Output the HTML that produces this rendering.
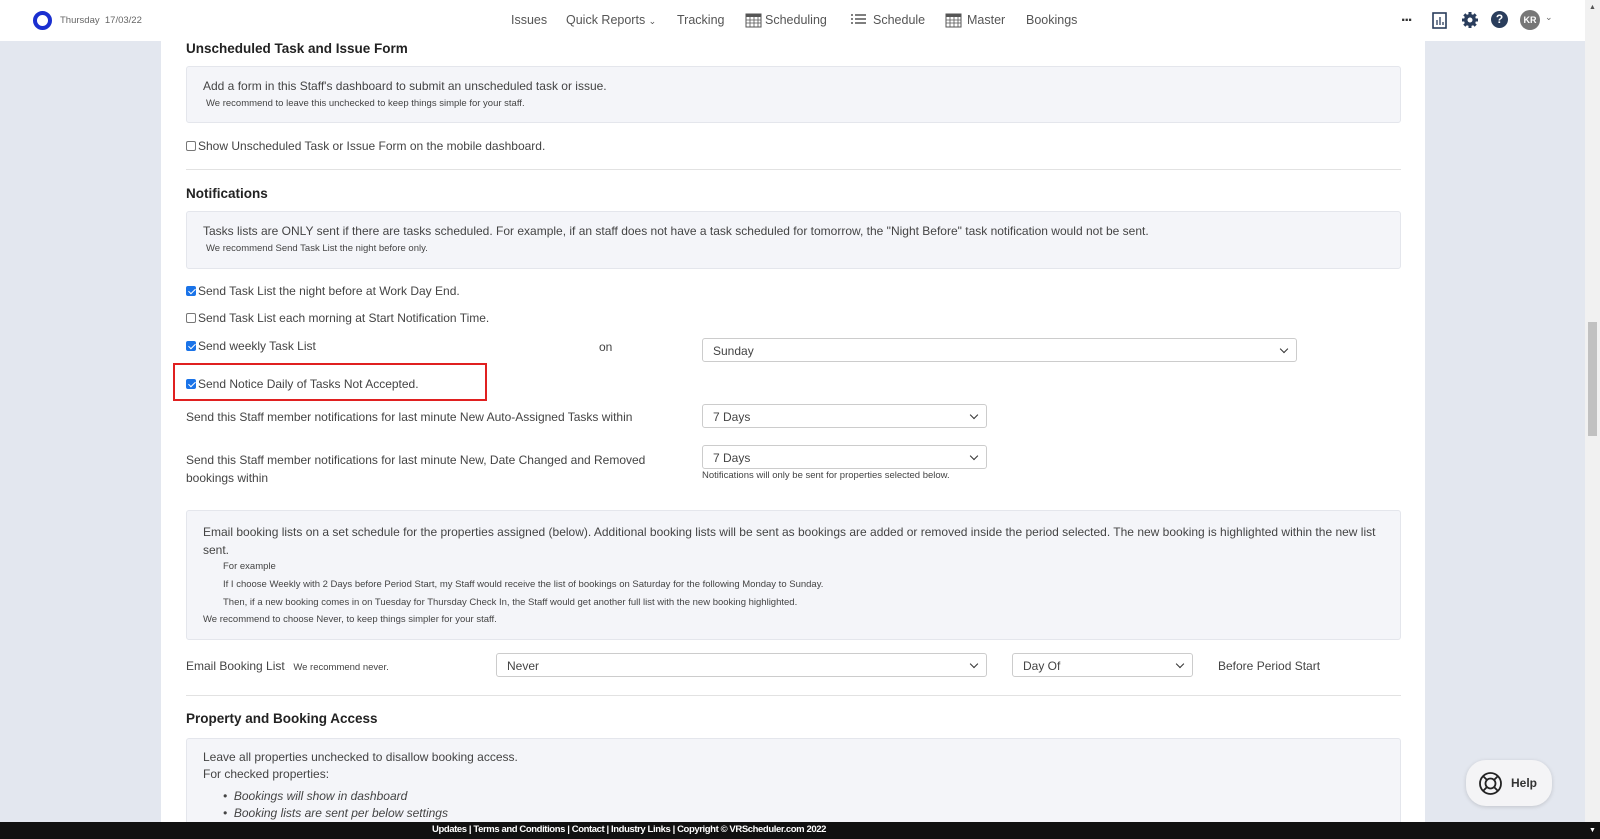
<!DOCTYPE html>
<html><head><meta charset="utf-8"><style>
*{box-sizing:border-box;margin:0;padding:0}
body{width:1600px;height:839px;overflow:hidden;background:#e3e7ef;font-family:"Liberation Sans",sans-serif;color:#444;font-size:12px;position:relative}
.a{position:absolute;white-space:nowrap}
.hdr{position:absolute;left:0;top:0;width:1585px;height:41px;background:#fff}
.nav{position:absolute;top:13px;font-size:12.5px;color:#555}
.panel{position:absolute;left:161px;top:41px;width:1264px;height:781px;background:#fff}
.h{position:absolute;left:186px;font-weight:bold;font-size:13.5px;color:#222}
.box{position:absolute;left:186px;width:1215px;background:#f4f5f9;border:1px solid #e4e6ec;border-radius:3px}
.sm{font-size:9.5px;color:#444}
.hr{position:absolute;left:186px;width:1215px;height:1px;background:#e2e2e2}
.cb{display:inline-block;width:10px;height:10px;border:1px solid #777;border-radius:2px;vertical-align:-1px;margin-right:2px;background:#fff}
.cb.on{background:#1a73e8;border-color:#1a73e8;position:relative}
.cb.on:after{content:"";position:absolute;left:2.5px;top:0px;width:3px;height:6px;border:solid #fff;border-width:0 1.5px 1.5px 0;transform:rotate(45deg)}
.sel{position:absolute;height:24px;border:1px solid #ccc;border-radius:3px;background:#fff;padding:5px 10px;font-size:12px;color:#444}
.sel:after{content:"";position:absolute;right:9px;top:7px;width:5px;height:5px;border:solid #333;border-width:0 1.5px 1.5px 0;transform:rotate(45deg)}
</style></head><body>
<div class="hdr">
<div class="a" style="left:33px;top:11px;width:19px;height:19px;border-radius:50%;border:4.5px solid #1a2fd0"></div>
<div class="a" style="left:60px;top:15px;font-size:9.5px;color:#666">Thursday&nbsp; 17/03/22</div>
<div class="nav a" style="left:511px">Issues</div>
<div class="nav a" style="left:566px">Quick Reports <span style="font-size:9px">&#8964;</span></div>
<div class="nav a" style="left:677px">Tracking</div>
<svg class="a" style="left:745px;top:12px" width="17" height="16" viewBox="0 0 17 16"><rect x="1" y="2" width="15" height="13" fill="none" stroke="#555"/><rect x="1" y="2" width="15" height="3" fill="#555"/><path d="M1 8h15M1 11h15M5 5v10M9 5v10M13 5v10" stroke="#555" stroke-width=".8"/></svg>
<div class="nav a" style="left:765px">Scheduling</div>
<svg class="a" style="left:851px;top:14px" width="15" height="11"><path d="M0 1h2M0 5h2M0 9h2M4 1h11M4 5h11M4 9h11" stroke="#555" stroke-width="1.6"/></svg>
<div class="nav a" style="left:873px">Schedule</div>
<svg class="a" style="left:945px;top:12px" width="17" height="16" viewBox="0 0 17 16"><rect x="1" y="2" width="15" height="13" fill="none" stroke="#555"/><rect x="1" y="2" width="15" height="3" fill="#555"/><path d="M1 8h15M1 11h15M5 5v10M9 5v10M13 5v10" stroke="#555" stroke-width=".8"/></svg>
<div class="nav a" style="left:967px">Master</div>
<div class="nav a" style="left:1026px">Bookings</div>
<div class="a" style="left:1401px;top:8px;font-size:16px;color:#333;font-weight:bold;letter-spacing:-1px">...</div>
<svg class="a" style="left:1432px;top:12px" width="15" height="17"><rect x="1" y="1" width="13" height="15" fill="none" stroke="#2a3d5c" stroke-width="1.6"/><path d="M5 13V8M8 13V5M11 13V10" stroke="#2a3d5c" stroke-width="1.3"/></svg>
<svg class="a" style="left:1461px;top:11px" width="18" height="18" viewBox="0 0 18 18"><circle cx="9" cy="9" r="6" fill="#2a3d5c"/><path d="M9 1v16M1 9h16M3.3 3.3l11.4 11.4M14.7 3.3L3.3 14.7" stroke="#2a3d5c" stroke-width="3"/><circle cx="9" cy="9" r="2.5" fill="#fff"/></svg>
<div class="a" style="left:1491px;top:11px;width:17px;height:17px;border-radius:50%;background:#2a3d5c;color:#fff;font-weight:bold;font-size:12px;text-align:center;line-height:17px">?</div>
<div class="a" style="left:1520px;top:10px;width:20px;height:20px;border-radius:50%;background:#777;color:#fff;font-size:9px;font-weight:bold;text-align:center;line-height:20px">KR</div>
<div class="a" style="left:1545px;top:12px;font-size:9px;color:#666">&#8964;</div>
</div>
<div class="panel"></div>
<div class="h" style="top:41px">Unscheduled Task and Issue Form</div>
<div class="box" style="top:66px;height:57px"><div class="a" style="left:16px;top:12px">Add a form in this Staff's dashboard to submit an unscheduled task or issue.</div><div class="a sm" style="left:19px;top:31px">We recommend to leave this unchecked to keep things simple for your staff.</div></div>
<div class="a" style="left:186px;top:139px"><span class="cb"></span>Show Unscheduled Task or Issue Form on the mobile dashboard.</div>
<div class="hr" style="top:169px"></div>
<div class="h" style="top:186px">Notifications</div>
<div class="box" style="top:211px;height:58px"><div class="a" style="left:16px;top:12px">Tasks lists are ONLY sent if there are tasks scheduled. For example, if an staff does not have a task scheduled for tomorrow, the "Night Before" task notification would not be sent.</div><div class="a sm" style="left:19px;top:31px">We recommend Send Task List the night before only.</div></div>
<div class="a" style="left:186px;top:284px"><span class="cb on"></span>Send Task List the night before at Work Day End.</div>
<div class="a" style="left:186px;top:311px"><span class="cb"></span>Send Task List each morning at Start Notification Time.</div>
<div class="a" style="left:186px;top:339px"><span class="cb on"></span>Send weekly Task List</div>
<div class="a" style="left:599px;top:340px">on</div>
<div class="sel" style="left:702px;top:338px;width:595px">Sunday</div>
<div class="a" style="left:173px;top:363px;width:314px;height:38px;border:2px solid #e02020"></div>
<div class="a" style="left:186px;top:377px"><span class="cb on"></span>Send Notice Daily of Tasks Not Accepted.</div>
<div class="a" style="left:186px;top:410px">Send this Staff member notifications for last minute New Auto-Assigned Tasks within</div>
<div class="sel" style="left:702px;top:404px;width:285px">7 Days</div>
<div class="a" style="left:186px;top:451px;line-height:18px">Send this Staff member notifications for last minute New, Date Changed and Removed<br>bookings within</div>
<div class="sel" style="left:702px;top:445px;width:285px">7 Days</div>
<div class="a sm" style="left:702px;top:470px">Notifications will only be sent for properties selected below.</div>
<div class="box" style="top:510px;height:130px">
<div class="a" style="left:16px;top:12px;line-height:18px">Email booking lists on a set schedule for the properties assigned (below). Additional booking lists will be sent as bookings are added or removed inside the period selected. The new booking is highlighted within the new list<br>sent.</div>
<div class="a sm" style="left:36px;top:50px">For example</div>
<div class="a sm" style="left:36px;top:68px">If I choose Weekly with 2 Days before Period Start, my Staff would receive the list of bookings on Saturday for the following Monday to Sunday.</div>
<div class="a sm" style="left:36px;top:86px">Then, if a new booking comes in on Tuesday for Thursday Check In, the Staff would get another full list with the new booking highlighted.</div>
<div class="a sm" style="left:16px;top:103px">We recommend to choose Never, to keep things simpler for your staff.</div>
</div>
<div class="a" style="left:186px;top:659px">Email Booking List <span class="sm">&nbsp; We recommend never.</span></div>
<div class="sel" style="left:496px;top:653px;width:491px">Never</div>
<div class="sel" style="left:1012px;top:653px;width:181px">Day Of</div>
<div class="a" style="left:1218px;top:659px">Before Period Start</div>
<div class="hr" style="top:695px"></div>
<div class="h" style="top:711px">Property and Booking Access</div>
<div class="box" style="top:738px;height:100px">
<div class="a" style="left:16px;top:11px">Leave all properties unchecked to disallow booking access.</div>
<div class="a" style="left:16px;top:28px">For checked properties:</div>
<div class="a" style="left:36px;top:50px;font-style:italic">&bull;&nbsp; Bookings will show in dashboard</div>
<div class="a" style="left:36px;top:67px;font-style:italic">&bull;&nbsp; Booking lists are sent per below settings</div>
</div>
<div class="a" style="left:1466px;top:760px;width:86px;height:46px;border-radius:20px;background:#f4f4f6;box-shadow:0 1px 4px rgba(0,0,0,.15)"></div>
<svg class="a" style="left:1478px;top:771px" width="25" height="25" viewBox="0 0 25 25"><circle cx="12.5" cy="12.5" r="10.5" fill="none" stroke="#222" stroke-width="1.8"/><circle cx="12.5" cy="12.5" r="5" fill="none" stroke="#222" stroke-width="1.8"/><path d="M5 5l4 4M20 5l-4 4M5 20l4-4M20 20l-4-4" stroke="#222" stroke-width="1.8"/></svg>
<div class="a" style="left:1511px;top:776px;font-size:12px;font-weight:bold;color:#333">Help</div>
<div class="a" style="left:0;top:822px;width:1600px;height:17px;background:#111;color:#fff;font-size:9.5px;font-weight:bold;padding-top:2px;letter-spacing:-.4px"><span style="position:absolute;left:432px">Updates | Terms and Conditions | Contact | Industry Links | Copyright © VRScheduler.com 2022</span></div>
<div class="a" style="left:1585px;top:0;width:15px;height:822px;background:#f1f1f1"></div>
<div class="a" style="left:1588px;top:322px;width:9px;height:114px;background:#c1c1c1"></div>
<div class="a" style="left:1589px;top:4px;font-size:7px;color:#555">&#9650;</div>
<div class="a" style="left:1589px;top:827px;font-size:7px;color:#fff">&#9660;</div>
</body></html>
